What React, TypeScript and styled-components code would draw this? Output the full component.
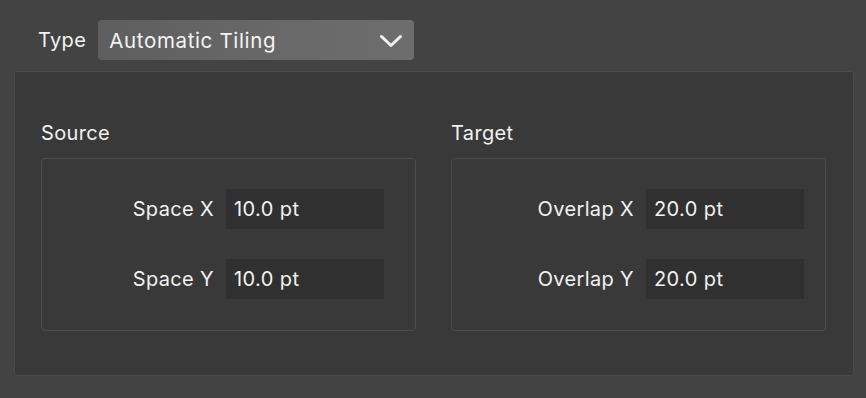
import styled, { createGlobalStyle } from 'styled-components';

const GlobalStyle = createGlobalStyle`
  html, body {
    margin: 0;
    padding: 0;
    background: #434343;
  }
  body {
    font-family: Inter, "Noto Sans", "Liberation Sans", sans-serif;
    color: #f2f2f2;
    -webkit-font-smoothing: antialiased;
  }
`;

// Whole window
const Page = styled.div`
  width: 866px;
  height: 398px;
  padding: 20px 12px 0 14px;
  box-sizing: border-box;
`;

// "Type" row with the dropdown
const TypeRow = styled.div`
  display: flex;
  align-items: center;
  gap: 12px;
  padding-left: 24px;
  height: 40px;
`;

const Label = styled.span`
  font-size: 20px;
  letter-spacing: 0.35px;
  white-space: nowrap;
`;

const Dropdown = styled.button`
  width: 316px;
  height: 40px;
  display: flex;
  align-items: center;
  justify-content: space-between;
  padding: 1px 11px 0 11px;
  box-sizing: border-box;
  border: none;
  border-radius: 4px;
  background: linear-gradient(90deg, #5e5e5e 0%, #696969 60%, #6d6d6d 100%);
  color: #f4f4f4;
  font-family: inherit;
  font-size: 20.5px;
  letter-spacing: 0.65px;
  cursor: pointer;

  svg {
    width: 24px;
    height: 16px;
  }
`;

// Outer panel holding both groups
const Panel = styled.div`
  margin-top: 11px;
  width: 840px;
  height: 305px;
  box-sizing: border-box;
  background: #393939;
  border: 1px solid #4b4b4b;
  border-radius: 3px;
  display: grid;
  grid-template-columns: 375px 375px;
  column-gap: 35px;
  padding: 49px 0 0 26px;
`;

const Group = styled.div`
  display: flex;
  flex-direction: column;
`;

const GroupTitle = styled.div`
  font-size: 20px;
  letter-spacing: 0.35px;
  height: 24px;
  line-height: 24px;
  margin-bottom: 13px;
`;

const GroupBox = styled.div<{ $padRight: number }>`
  height: 173px;
  box-sizing: border-box;
  border: 1px solid #4d4d4d;
  border-radius: 4px;
  display: flex;
  flex-direction: column;
  align-items: flex-end;
  gap: 30px;
  padding: 30px ${(p) => p.$padRight}px 0 0;
`;

const FieldRow = styled.div`
  display: flex;
  align-items: center;
  gap: 12px;
`;

const Field = styled.div`
  width: 158px;
  height: 40px;
  box-sizing: border-box;
  background: #303030;
  display: flex;
  align-items: center;
  padding-left: 8px;
  font-size: 20px;
  letter-spacing: 0.4px;
  color: #f2f2f2;
`;

const Chevron = () => (
  <svg viewBox="0 0 24 16" fill="none">
    <path d="M2.5 3.5 L12 12.5 L21.5 3.5" stroke="#f2f2f2" strokeWidth="3" strokeLinecap="round" strokeLinejoin="round" />
  </svg>
);

const groups = [
  {
    title: 'Source',
    padRight: 31,
    fields: [
      { label: 'Space X', value: '10.0 pt' },
      { label: 'Space Y', value: '10.0 pt' },
    ],
  },
  {
    title: 'Target',
    padRight: 21,
    fields: [
      { label: 'Overlap X', value: '20.0 pt' },
      { label: 'Overlap Y', value: '20.0 pt' },
    ],
  },
];

const App = () => {
  return (
    <>
      <GlobalStyle />
      <Page>
        <TypeRow>
          <Label>Type</Label>
          <Dropdown>
            <span>Automatic Tiling</span>
            <Chevron />
          </Dropdown>
        </TypeRow>

        <Panel>
          {groups.map((g) => (
            <Group key={g.title}>
              <GroupTitle>{g.title}</GroupTitle>
              <GroupBox $padRight={g.padRight}>
                {g.fields.map((f) => (
                  <FieldRow key={f.label}>
                    <Label>{f.label}</Label>
                    <Field>{f.value}</Field>
                  </FieldRow>
                ))}
              </GroupBox>
            </Group>
          ))}
        </Panel>
      </Page>
    </>
  );
};

export default App;
